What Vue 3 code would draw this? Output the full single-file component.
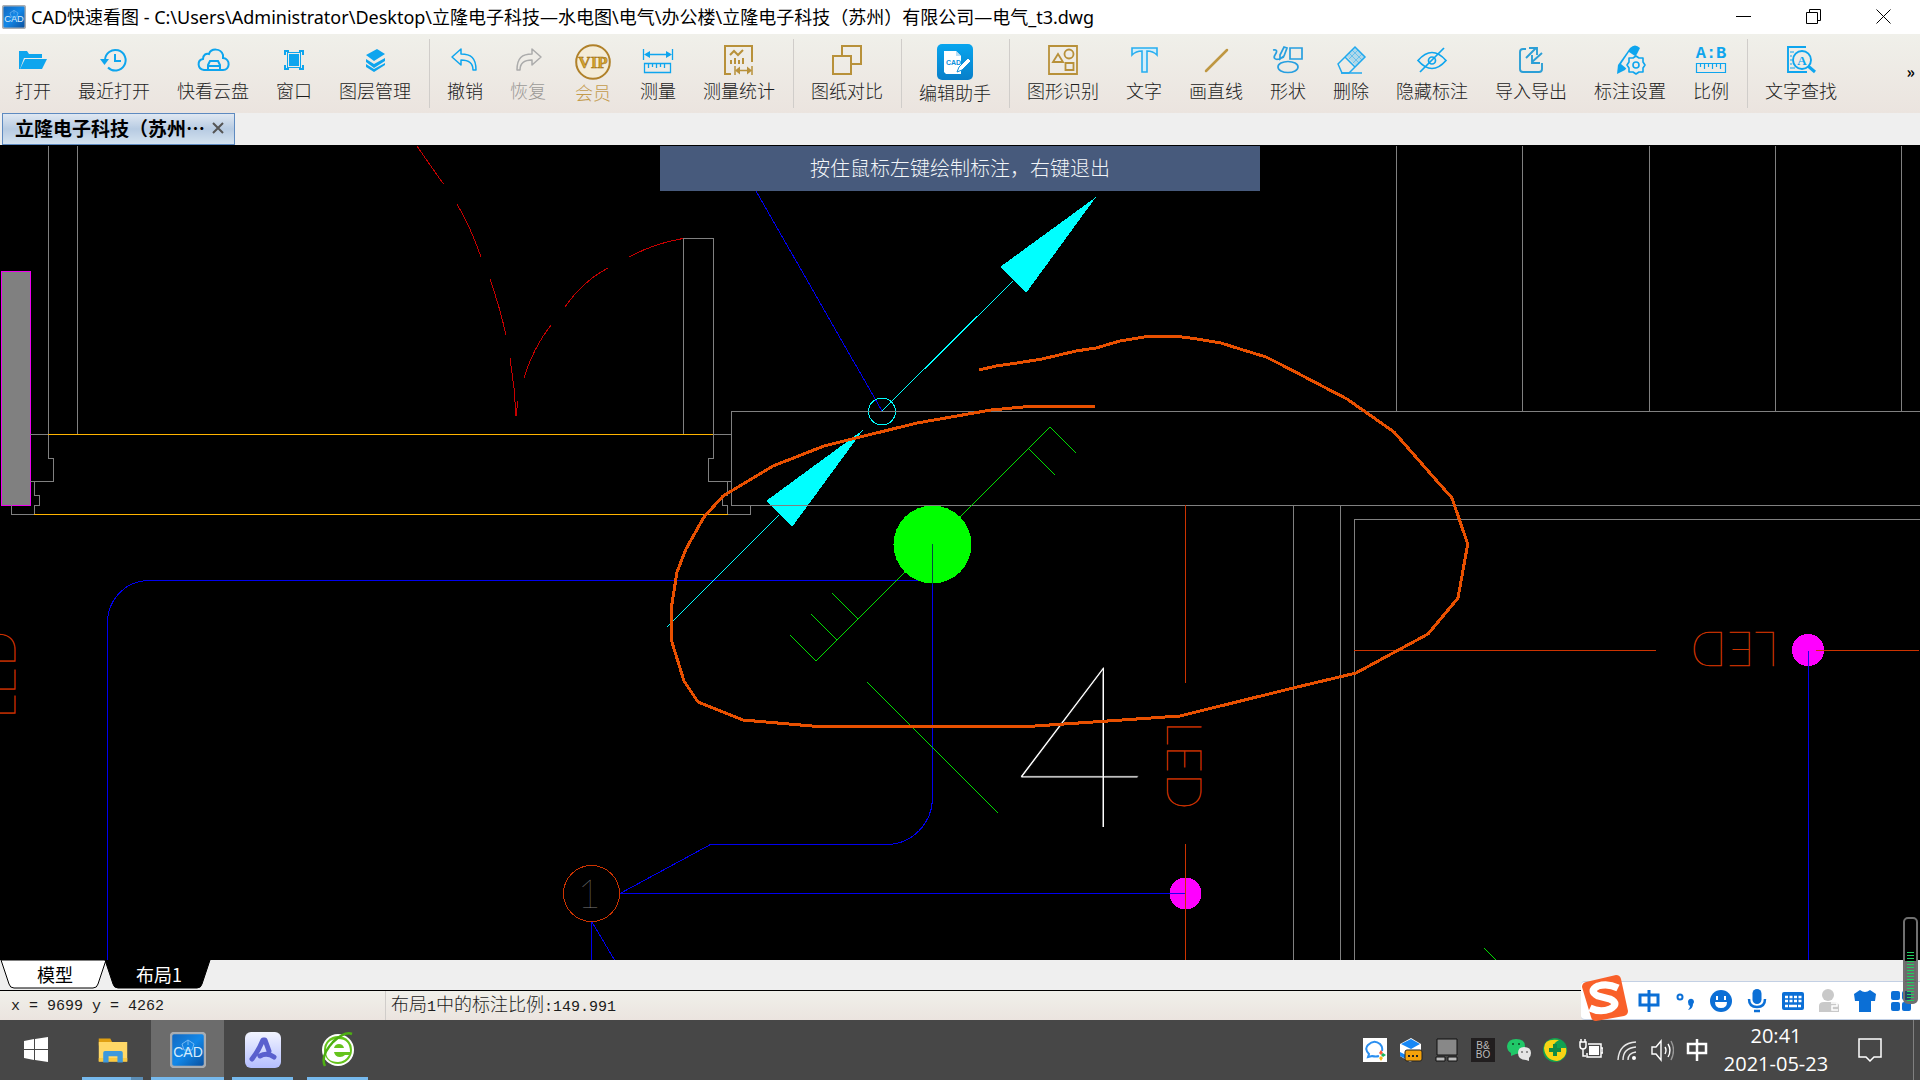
<script setup>
const blue = '#0ea5ee'
const gold = '#b8913a'

const icons = {
  open: `<path fill="${blue}" d="M4 25V7h8l2 3h13v4H9L5 25z"/><path fill="${blue}" d="M10 15h22l-5 10H5z"/>`,
  recent: `<g fill="none" stroke="${blue}" stroke-width="2"><path d="M9 16a10.3 10.3 0 1 1 3 7.5"/><path d="M19 10v7h6"/></g><path fill="${blue}" d="M4 15h9l-4.500 6z"/>`,
  cloud: `<g fill="none" stroke="${blue}" stroke-width="2"><path d="M12 26H9c-7-1-7-10-1-11 0-4 3-6 6-5 2-6 12-6 14 1v3c8 1 7 12 0 12h-3"/><path d="M13 26v-5l2-4h8l2 4v5zM13 22h12"/></g>`,
  window: `<g fill="none" stroke="${blue}" stroke-width="2"><path d="M9 11V7h4M23 7h4v4M27 21v4h-4M13 25H9v-4"/></g><rect x="11.500" y="8.500" width="13" height="15" fill="none" stroke="${blue}"/><rect x="13" y="10" width="10" height="12" fill="${blue}"/>`,
  layers: `<path fill="${blue}" d="M9 11l11-6 8 5-11 7zM9 15l8 5 11-6v3l-11 7-8-6zM9 20l8 5 11-6v2l-11 7-8-5z"/>`,
  undo: `<path fill="none" stroke="${blue}" stroke-width="1.500" stroke-linejoin="round" d="M5 13l9-8v5c10 0 15 4 15 16h-3c0-7-4-10-12-10v5z"/>`,
  redo: `<path fill="none" stroke="#ababab" stroke-width="1.500" stroke-linejoin="round" d="M31 13l-9-8v5C12 10 7 14 7 26h3c0-7 4-10 12-10v5z"/>`,
  vip: `<circle cx="18" cy="18" r="16.800" fill="#f4ecd8" stroke="#b0812a" stroke-width="2"/><text x="18" y="24" text-anchor="middle" font-family="Liberation Serif, serif" font-weight="700" font-size="17" fill="#d6a52c" stroke="#94650f" stroke-width=".5">VIP</text>`,
  measure: `<g fill="none" stroke="${blue}" stroke-width="1.300"><path d="M3.500 5v11M32.500 5v11M6 10.500h24"/><path d="M4.500 19.500h26v9h-26zM8.500 20v4M12.500 20v3M16.500 20v4M20.500 20v3M24.500 20v4"/></g><path fill="${blue}" d="M4 10.500l6-3.500v7zM32 10.500l-6-3.500v7z"/>`,
  stats: `<g fill="none" stroke="${gold}" stroke-width="2"><path d="M10 30H4V2h27v16M9 11l4-4 4 4 5-5M10 20v-4M14 20v-6M18 20v-4M22 20v-6"/><path d="M14 22v9M31 22v9M16 26.500h13" stroke-width="1.500"/></g><path fill="${gold}" d="M14 26.500l5-4v8zM31 26.500l-5-4v8z"/>`,
  compare: `<g fill="none" stroke="${gold}" stroke-width="2"><path d="M13 11V2h19v18h-9"/><path d="M4 12h18v18H4z"/></g>`,
  helper: `<defs><linearGradient id="hg" x2="0" y2="1"><stop stop-color="#08a5ee"/><stop offset="1" stop-color="#087fc9"/></linearGradient></defs><rect width="36" height="36" rx="5" fill="url(#hg)"/><path fill="#fff" d="M7 7h12l5 5v18H9l-2-2z"/><path fill="#b9def5" d="M19 7v5h5z"/><text x="9" y="21" font-family="Liberation Sans, sans-serif" font-size="7" font-weight="700" fill="#0b90dc">CAD</text><path d="M20 28l2-5 9-9 3 3-9 9z" fill="#fff" stroke="#0b90dc"/>`,
  shapes: `<g fill="none" stroke="${gold}" stroke-width="1.800"><path d="M4 2h28v28H4z"/><path d="M8 18l5-8 5 8z"/><circle cx="24" cy="10" r="4.500"/><path d="M20.500 19h8v7h-8z"/></g>`,
  text: `<path fill="#d3eefa" stroke="#27aef0" stroke-width="1.600" d="M6 4h25v7c-3-3-6-4-10-4v21h-5V7c-4 0-7 1-10 4z"/>`,
  line: `<path stroke="#bf9742" stroke-width="2.500" stroke-linecap="round" d="M8 27L29 6"/>`,
  forms: `<g fill="none" stroke="#279fe0" stroke-width="1.700"><path d="M20 4h12v11H20z"/><ellipse cx="18" cy="23" rx="10" ry="5.500"/><path d="M3 6c5-1 4 2 2 5s0 5 4 4l5-2M10 11l4-8 3 1-3 8-4 3z"/></g>`,
  erase: `<g fill="none" stroke="#20a9ee" stroke-width="1.500"><path d="M5 20L22 3l10 10-16 16h-7zM12 13l10 10"/><path d="M8 29h21"/></g><path fill="#20a9ee" fill-opacity=".3" d="M22 3l10 10-9 9-10-10z"/><path stroke="#20a9ee" stroke-width=".5" d="M19 6l10 10M16 9l10 10M25 6L16 15M29 10l-9 9"/>`,
  eye: `<g fill="none" stroke="${blue}" stroke-width="1.700"><path d="M4 16.500q14-16 28 0q-14 16-28 0z"/><circle cx="18" cy="16.500" r="3.500"/><path d="M30 4L6 28"/></g>`,
  exchange: `<g fill="none" stroke="#2c9fd6" stroke-width="1.900"><path d="M13 5h-3q-3 0-3 3v17q0 3 3 3h16q3 0 3-3v-6"/><path d="M13 14L23 4M16 4h8v7M29 9L19 18M19 11v8h8"/></g>`,
  settings: `<path fill="${blue}" d="M5 30l1-9L18 4q5-5 10 0l-3 6-12 16z"/><path fill="#eeedea" d="M9 20l8-12 6 4-8 13z"/><path d="M24 12l3 2h4v4l2 3-2 3v4h-4l-3 2-3-2h-4v-4l-2-3 2-3v-4h4z" fill="#eeedea" stroke="${blue}" stroke-width="1.600" stroke-linejoin="round"/><circle cx="24" cy="21" r="3" fill="none" stroke="${blue}" stroke-width="1.600"/>`,
  ratio: `<text x="18" y="14" text-anchor="middle" font-family="Liberation Mono, monospace" font-weight="700" font-size="17" fill="${blue}">A:B</text><path fill="none" stroke="${blue}" stroke-width="1.200" d="M3.500 19.500h29v9h-29zM7.500 20v3M11.500 20v5M15.500 20v3M19.500 20v5M23.500 20v3M27.500 20v5"/>`,
  find: `<g fill="none" stroke="${blue}" stroke-width="1.900"><path d="M23 3H5v25h19"/><circle cx="19" cy="16" r="9"/><path d="M25 22l7 6" stroke-width="3"/></g><path stroke="${blue}" d="M7 8h4M7 12h2M7 16h2M7 20h2M7 24h5"/><text x="19" y="21" text-anchor="middle" font-family="Liberation Serif, serif" font-weight="700" font-size="13" fill="${blue}">A</text>`,
}

const groups = [
  [['打开', 'open'], ['最近打开', 'recent'], ['快看云盘', 'cloud'], ['窗口', 'window'], ['图层管理', 'layers']],
  [['撤销', 'undo'], ['恢复', 'redo', 'off'], ['会员', 'vip', 'big gold'], ['测量', 'measure'], ['测量统计', 'stats']],
  [['图纸对比', 'compare']],
  [['编辑助手', 'helper', 'big']],
  [['图形识别', 'shapes'], ['文字', 'text'], ['画直线', 'line'], ['形状', 'forms'], ['删除', 'erase'], ['隐藏标注', 'eye'], ['导入导出', 'exchange'], ['标注设置', 'settings'], ['比例', 'ratio']],
  [['文字查找', 'find']],
]

const ime = [
  ['中文', `<path fill="none" stroke="#0b6fd6" stroke-width="3" d="M3 6h18v10H3zM12 1v22"/>`],
  ['标点', `<circle cx="7" cy="8" r="2.500" fill="none" stroke="#0b6fd6" stroke-width="2"/><path fill="#0b6fd6" d="M15 13a3 3 0 1 1 5 2q0 5-5 6 2-2 2-4-2-1-2-4z"/>`],
  ['表情', `<circle cx="12" cy="12" r="11" fill="#0b6fd6"/><path fill="#fff" d="M7 7h2v4H7zM15 7h2v4h-2zM6 13h12q0 6-6 6t-6-6z"/>`],
  ['语音', `<rect x="7.500" y="0" width="9" height="15" rx="4.500" fill="#0b6fd6"/><path fill="none" stroke="#0b6fd6" stroke-width="2.500" d="M4 10q0 8 8 8t8-8M9 22h6"/>`],
  ['键盘', `<rect x="1" y="3" width="22" height="18" rx="2" fill="#0b6fd6"/><path stroke="#fff" stroke-width="2.500" stroke-dasharray="3 1.500" d="M4 8h17M4 12h17"/><path stroke="#fff" stroke-width="2.500" d="M4 17h3M8 17h8M17 17h3"/>`],
  ['账号', `<circle cx="11" cy="6" r="6" fill="#c9c9c9"/><path fill="#c9c9c9" d="M2 23v-6q0-4 5-4h9q6 0 6 4v6z"/><path fill="none" stroke="#fff" stroke-width="1.500" d="M14 14h6v3h-5v4h6"/>`],
  ['皮肤', `<path fill="#0b6fd6" d="M7 1q5 4 10 0l6 4-1 7h-4v11H6V12H2L1 5z"/>`],
  ['工具箱', `<g fill="#0b6fd6"><rect x="2" y="2" width="9" height="9" rx="2"/><rect x="13" y="2" width="9" height="9" rx="2"/><rect x="2" y="13" width="9" height="9" rx="2"/><rect x="13" y="13" width="9" height="9" rx="2"/></g>`],
]

const tray = [
  ['会议', `<path fill="#fff" d="M0 0h24v24H0z"/><path fill="none" stroke="#2b8ff0" stroke-width="2" d="M16 18q-3 1-7 0l-4 1 1-3q-5-5-1-9 6-6 12-1 3 3 2 7"/><path fill="#ff5b3a" d="M18 12l2 3-2 2-2-2z"/><path fill="#1cb65c" d="M20 15l3 2-3 2-2-2z"/><path fill="#f8b91d" d="M18 18l2 2-2 3-2-3z"/>`],
  ['存储', `<path fill="#fff" d="M1 6l11-6 10 6v13l-11 5-10-6z"/><path fill="#1687f5" d="M2 6l10-5 9 5-9 5zM1 14l6 3v4l-6-3z"/><rect x="6" y="12" width="17" height="11" rx="2" fill="#f5a20b" stroke="#222"/><path d="M9 18h2M13 18h2M17 18h2" stroke="#222" stroke-width="2"/>`],
  ['触控板', `<path fill="#888" stroke="#111" d="M2 1h20v16H2z"/><path fill="#bbb" stroke="#111" d="M1 19h9v4H1zM13 19h9v4h-9z"/>`],
  ['音频', `<path fill="#211e1f" d="M0 0h24v24H0z"/><text x="12" y="11" text-anchor="middle" font-family="Liberation Sans, sans-serif" font-size="10" fill="#bbb">B&amp;</text><text x="12" y="20" text-anchor="middle" font-family="Liberation Sans, sans-serif" font-size="10" fill="#bbb">BO</text>`],
  ['微信', `<path fill="#20c868" d="M9 1q9 0 9 7t-9 8l-5 2v-3q-4-2-4-7 1-7 9-7z"/><path fill="#e5e5e5" d="M17 9q7 0 7 6 0 3-2 5v3l-3-1q-8 0-8-7 0-6 6-6z"/><path stroke="#116633" stroke-width="2" d="M5 6h2M11 6h2"/><path stroke="#777" stroke-width="1.500" d="M14 14h2M19 14h2"/>`],
  ['安全', `<circle cx="12" cy="12" r="12" fill="#11a152"/><path fill="#f8d415" d="M1 10q0-10 15-8-7 4-5 8h12q2 10-9 13Q2 22 1 10z"/><path stroke="#118a45" stroke-width="4" d="M12 6v12M6 12h12"/>`],
  ['电源', `<path fill="none" stroke="#fff" stroke-width="1.500" d="M9 6h13v13H8v-4M22 10h2v5h-2M1 4v4q0 3 3 3t3-3V4zM2 4V1M6 4V1M4 11v7h3"/><path fill="#fff" d="M10 8h10v9H10z"/>`],
  ['网络', `<g fill="none" stroke="#e8e8e8" stroke-width="1.400"><path d="M3 22Q4 5 21 4M8 22Q8 10 21 9M13 22q0-7 8-8"/></g><circle cx="19" cy="20" r="2" fill="#fff"/>`],
  ['音量', `<g fill="none" stroke="#fff" stroke-width="1.400"><path d="M2 9h4l5-6v19l-5-6H2zM15 9q2 3 0 7M18 6q4 6 0 13"/><path stroke="#999" d="M21 3q5 9 0 19"/></g>`],
  ['输入法', `<path fill="none" stroke="#fff" stroke-width="2.500" d="M3 6h18v9H3zM12 1v22"/>`],
]

const CAD = `<defs><linearGradient id="cg" x2="1" y2="1"><stop stop-color="#1266bd"/><stop offset=".5" stop-color="#1388e8"/><stop offset="1" stop-color="#0a4c99"/></linearGradient></defs><rect x="1" y="1" width="34" height="34" rx="3" fill="url(#cg)" stroke="#a9adb2" stroke-width="2.500"/><path d="M12 12l6-4 6 4-2 6h-8zM18 8v5" fill="none" stroke="#75b9f3"/><text x="18" y="25" text-anchor="middle" font-family="Liberation Sans, sans-serif" font-size="14" fill="#d8ecfc">CAD</text>`

const apps = [
  ['开始', 'start', `<path fill="#fff" d="M6 9l10-2v10H6zM17 7l13-2v12H17zM6 18h10v10L6 26zM17 18h13v12l-13-2z"/>`],
  ['文件资源管理器', 'run split', `<path fill="#e0a012" d="M2 5h13l2 4v4H2z"/><path fill="#ffd867" d="M2 9h32v22H2z"/><path fill="#fbc93e" d="M2 27h32v4H2z"/><path fill="#3d99dd" d="M7 32V21q0-2 2-2h18q2 0 2 2v11h-6v-7H13v7z"/>`],
  ['CAD快速看图', 'run active', CAD],
  ['应用', 'run', `<defs><linearGradient id="ag" x2="0" y2="1"><stop stop-color="#f2f4ff"/><stop offset="1" stop-color="#b4beff"/></linearGradient></defs><rect width="36" height="36" rx="6" fill="url(#ag)"/><path fill="none" stroke="#5a60ce" stroke-width="5" stroke-linecap="round" stroke-linejoin="round" d="M7 27Q14 18 18 8h2l4 11M29 25q-7-5-14-1"/>`],
  ['浏览器', 'run', `<circle cx="18" cy="18" r="16" fill="#fff"/><circle cx="18" cy="18" r="14" fill="#65c31c"/><path fill="#fff" d="M6 19q0-12 12-12t12 13H14q1 5 6 5 3 0 5-2h4q-4 7-11 7Q6 30 6 19z"/><path fill="#65c31c" d="M14 16q1-4 5-4t5 4z"/><path fill="none" stroke="#4daf12" stroke-width="2.500" d="M32 2Q25-1 13 10 0 24 5 34"/>`],
]

const grey = [
  'M48.500 146V458.500H53.500V481.500H30', 'M77.500 146V434', 'M30 434.500H48', 'M34.500 481V495.500H39.500V505.500H34.500V514.500H11.500V505',
  'M683.500 434V238.500H713.500V458.500H708.500V481.500H731', 'M713 434.500H731', 'M727.500 481V495.500H722.500V505.500H727.500V514.500H750.500V505',
  'M1920 411.500H731.500V505.500H1920', 'M1396.500 146V411', 'M1522.500 146V411', 'M1649.500 146V411', 'M1775.500 146V411', 'M1901.500 146V411',
  'M1293.500 505V960', 'M1340.500 505V960', 'M1354.500 960V519.500H1920',
]
const arcs = [
  'M417 146Q432 168 443.500 184', 'M457 204Q471 228 481 257', 'M490 279Q500 308 506 335', 'M510 358L514 388L516 416L518 401',
  'M524 378Q533 348 551 325', 'M565 307Q583 281 608 268', 'M629 257Q655 243 683 238.500',
]
const wires = [
  'M107.500 960V623A41 42 0 0 1 148 580.500H924', 'M756 191L882 411', 'M932.500 544V797A46 47 0 0 1 887 844.500H710.500L620 893.500H1185',
  'M591.500 922V960', 'M592 922L614.500 960', 'M1808.500 651V960',
]
const greens = [
  'M1076 453L1050 427L816 661L790 635', 'M1029 449L1055 475', 'M837 640L811 614', 'M858 619L832 593', 'M867 682L998 813', 'M1484.500 948.500L1496 960',
]
const sketch = '979,370 996,366 1017,363 1042,359 1076,351 1096,348 1120,341 1144,337 1158,336 1175,336 1197,339 1221,343 1240,349 1266,357 1280,364 1347,399 1394,432 1436,480 1452,498 1467,542 1467,548 1458,598 1428,634 1356,673 1293,688 1180,716 1035,726 812,726 743,720 698,702 684,681 671,639 671,610 677,572 686,549 704,517 723,496 773,466 824,446 860,437 917,423 991,410 1034,406 1084,406 1095,407'
</script>

<template>
  <div class="desktop">
    <header class="titlebar">
      <svg class="logo" viewBox="0 0 36 36" v-html="CAD"></svg>
      <h1>CAD快速看图 - C:\Users\Administrator\Desktop\立隆电子科技—水电图\电气\办公楼\立隆电子科技（苏州）有限公司—电气_t3.dwg</h1>
      <div class="winctl">
        <button aria-label="最小化"><svg viewBox="0 0 16 16"><path d="M0 7.500h15" /></svg></button>
        <button aria-label="还原"><svg viewBox="0 0 16 16"><path d="M.5 3.500h11v11H.5zM3.500 3V.5h11v11H12" /></svg></button>
        <button aria-label="关闭"><svg viewBox="0 0 16 16"><path d="M.5.5l14 14M14.500.5l-14 14" /></svg></button>
      </div>
    </header>

    <nav class="toolbar">
      <div v-for="(g, i) in groups" :key="i" class="group">
        <button v-for="t in g" :key="t[1]" class="tool" :class="t[2]">
          <svg :viewBox="(t[2] || '').includes('big') ? '0 0 36 36' : '0 0 36 32'" v-html="icons[t[1]]"></svg>
          <span>{{ t[0] }}</span>
        </button>
      </div>
      <button class="more">»</button>
    </nav>

    <div class="filetabs">
      <div class="filetab">
        <span>立隆电子科技（苏州…</span>
        <button aria-label="关闭标签"><svg viewBox="0 0 12 12"><path d="M1 1l10 10M11 1L1 11" /></svg></button>
      </div>
    </div>

    <main class="canvas">
      <svg class="drawing" viewBox="0 145 1920 815" preserveAspectRatio="xMinYMin slice">
        <g class="crisp">
          <path v-for="d in wires" :key="d" :d="d" stroke="#0000f0" />
          <rect x="1" y="271.500" width="29" height="234" fill="#808080" stroke="#f000f0" />
          <path v-for="d in arcs" :key="d" :d="d" stroke="#c80000" />
          <path d="M882 411L1013 281M667 627L779 515" stroke="#00ffff" />
          <path d="M1096 197L1000 267L1026 293ZM863 430L766 501L792 527Z" class="cyan" />
          <circle cx="882" cy="411.500" r="13.500" stroke="#00ffff" />
          <path v-for="d in grey" :key="d" :d="d" stroke="#808080" />
          <path d="M48 434.500H713M34 514.500H728" stroke="#ffb400" />
          <path v-for="d in greens" :key="d" :d="d" stroke="#00e000" />
          <circle cx="932.500" cy="544.500" r="39" class="lamp" />
          <path d="M932.500 544V584" stroke="#004d40" />
          <circle cx="1185.500" cy="893.500" r="16" class="node" />
          <circle cx="1808" cy="650" r="16" class="node" />
          <path d="M1169 893.500H1185M1808.500 651V667" stroke="#2000f0" />
          <path d="M1185.500 505V683M1185.500 844V960M1354 650.500H1656M1816 650.500H1919" stroke="#cc3300" />
          <circle cx="591.500" cy="893.500" r="28" stroke="#cc3300" />
        </g>
        <text class="led" transform="translate(1167 721) rotate(90)">LED</text>
        <text class="led" transform="translate(1779 632) rotate(180)">LED</text>
        <text class="led" transform="translate(15 719) rotate(-90)">LED</text>
        <text class="num" x="589" y="908" text-anchor="middle">1</text>
        <text class="count" x="1080" y="827" text-anchor="middle">4</text>
        <polyline class="crisp sketch" :points="sketch" />
      </svg>
      <p class="hint">按住鼠标左键绘制标注，右键退出</p>
    </main>

    <footer class="bottom">
      <div class="sheets">
        <button class="sheet model">
          <svg viewBox="0 0 107 29"><path d="M1 0L9 24q1 4 5 4H93q4 0 5-4L106 0z" /></svg>
          <span>模型</span>
        </button>
        <button class="sheet layout">
          <svg viewBox="0 0 107 29"><path d="M1 0L9 24q1 4 5 4H93q4 0 5-4L106 0z" /></svg>
          <span>布局1</span>
        </button>
      </div>
      <div class="status">
        <span class="coords mono">x = 9699 y = 4262</span>
        <span class="scale">布局<i class="mono">1</i>中的标注比例<i class="mono">:149.991</i></span>
      </div>
      <div class="ime">
        <svg class="sogou" viewBox="0 0 48 46">
          <path d="M5 7L35 0q4 0 5 4l7 32q0 4-4 5L15 46q-4 0-5-4L1 12q0-4 4-5z" fill="#f9602a" />
          <path d="M37 13Q27 8 17 11q-10 5 0 10l12 3q10 5 0 10-10 4-20-1" fill="none" stroke="#fff" stroke-width="7" />
        </svg>
        <button v-for="m in ime" :key="m[0]" :aria-label="m[0]"><svg viewBox="0 0 24 24" v-html="m[1]"></svg></button>
      </div>
      <div class="meter"><i></i></div>
    </footer>

    <div class="taskbar">
      <button v-for="a in apps" :key="a[0]" class="app" :class="a[1]" :aria-label="a[0]">
        <svg viewBox="0 0 36 36" v-html="a[2]"></svg>
      </button>
      <div class="tray">
        <button v-for="t in tray" :key="t[0]" :aria-label="t[0]"><svg viewBox="0 0 24 24" v-html="t[1]"></svg></button>
      </div>
      <div class="clock"><time>20:41</time><time>2021-05-23</time></div>
      <button class="notice" aria-label="通知"><svg viewBox="0 0 24 24"><path d="M1 1h22v18h-7l-4 4-4-4H1z" /></svg></button>
    </div>
  </div>
</template>

<style>
body { margin: 0; background: #000; }
</style>

<style scoped>
.desktop {
  display: flex;
  flex-direction: column;
  min-height: 100vh;
  overflow: hidden;
  font-family: "Noto Sans CJK SC", sans-serif;
  font-size: 18px;
  color: #000;
}
button {
  margin: 0;
  padding: 0;
  border: 0;
  background: none;
  font: inherit;
  color: inherit;
}
svg { display: block; flex: none; }
h1, p { margin: 0; font-weight: 400; }

.titlebar {
  display: flex;
  align-items: center;
  height: 34px;
  padding: 0 1px 0 2px;
  background: #fff;
}
.logo { width: 24px; height: 24px; margin-right: 5px; }
.titlebar h1 {
  flex: 1;
  overflow: hidden;
  white-space: nowrap;
  font-family: "Noto Sans", "Noto Sans CJK SC", sans-serif;
  font-size: 18px;
  line-height: 34px;
}
.winctl { display: flex; }
.winctl button { display: flex; justify-content: center; width: 70px; padding: 9px 0; }
.winctl svg { width: 16px; height: 16px; fill: none; stroke: #000; }

.toolbar {
  display: flex;
  height: 79px;
  background: linear-gradient(#f0f0ea, #ebe4df);
}
.group {
  display: flex;
  align-items: flex-start;
  gap: 27px;
  margin: 5px 0;
  padding: 5px 18px 0 17px;
  border-right: 1px solid #d0cdca;
}
.group:first-child { padding-left: 15px; }
.group:nth-child(6) { border-right: 0; }
.tool {
  display: flex;
  flex-direction: column;
  align-items: center;
  gap: 3px;
  min-width: 36px;
  line-height: 22px;
  font-weight: 300;
  color: #1c1c1c;
  white-space: nowrap;
}
.tool svg { width: 36px; height: 32px; }
.big { gap: 1px; }
.big svg { height: 36px; }
.gold { width: 40px; color: #c39a4b; }
.off { color: #9c9a98; }
.more { margin-left: auto; padding: 0 5px 6px 0; font-size: 16px; font-weight: 700; }

.filetabs { display: flex; height: 32px; padding-left: 2px; background: #efefef; }
.filetab {
  display: flex;
  align-items: center;
  gap: 7px;
  box-sizing: border-box;
  width: 233px;
  padding: 0 0 2px 12px;
  border: 1px solid #5e8ac0;
  background: linear-gradient(#e0e8f2, #b7cbe2 50%, #d5e3f0);
  font-size: 19px;
  font-weight: 700;
  line-height: 28px;
  white-space: nowrap;
}
.filetab svg { width: 12px; height: 12px; fill: none; stroke: #555; stroke-width: 2; }

.canvas { display: grid; flex: 1; overflow: hidden; background: #000; }
.drawing { grid-area: 1 / 1; width: 100%; height: 100%; }
.crisp { fill: none; shape-rendering: crispEdges; }
.cyan { fill: #0ff; }
.lamp { fill: #0f0; }
.node { fill: #f0f; }
.sketch { stroke: #e85000; stroke-width: 3; }
.led { font: 100 48px Lato, sans-serif; fill: #cc3300; stroke: #cc3300; stroke-width: 0.5; }
.num { font: 100 40px Lato, sans-serif; fill: #808080; }
.count { font: 100 228px Lato, sans-serif; fill: #fff; stroke: #000; stroke-width: 1; }
.hint {
  grid-area: 1 / 1;
  align-self: start;
  justify-self: center;
  width: 600px;
  margin-top: 1px;
  padding-bottom: 2px;
  background: #475a7c;
  color: #f2f5f8;
  font-size: 20px;
  font-weight: 300;
  line-height: 43px;
  text-align: center;
}

.bottom { position: relative; }
.sheets { display: flex; height: 30px; background: #efefef; border-bottom: 1px solid #000; }
.sheet { display: grid; width: 104px; }
.sheet svg { grid-area: 1 / 1; width: 107px; height: 29px; fill: #fff; stroke: #000; }
.sheet span { grid-area: 1 / 1; z-index: 1; width: 110px; line-height: 28px; text-align: center; }
.layout { color: #fff; }
.layout svg { fill: #000; }
.status {
  display: flex;
  align-items: center;
  height: 29px;
  background: linear-gradient(#f0f0ea, #ebe4df);
  color: #1c1c1c;
  font-weight: 300;
}
.mono { font-family: "Liberation Mono", monospace; font-size: 15px; font-style: normal; font-weight: 400; }
.coords { width: 374px; padding: 2px 0 0 11px; }
.scale { padding-left: 5px; border-left: 1px solid #d0cdca; line-height: 24px; }
.ime {
  position: absolute;
  right: 0;
  bottom: 0;
  display: flex;
  align-items: center;
  box-sizing: border-box;
  height: 39px;
  padding-right: 1px;
  border: 1px solid #c3d0e4;
  border-width: 1px 0;
  border-radius: 4px 0 0 4px;
  background: #fff;
}
.ime button { width: 36px; padding: 0 6px; box-sizing: border-box; }
.ime button svg { width: 24px; height: 24px; }
.sogou { width: 48px; height: 46px; margin: -6px 2px 0 0; }
.meter {
  position: absolute;
  right: 2px;
  bottom: 16px;
  box-sizing: border-box;
  width: 15px;
  height: 87px;
  padding: 33px 2px 3px;
  border: 2px solid #707070;
  border-radius: 5px;
  background: linear-gradient(#000 42px, rgba(50, 50, 50, 0.7) 42px);
}
.meter i { display: block; height: 49px; background: repeating-linear-gradient(#20d060 0 1px, transparent 1px 3px); }

.taskbar { display: flex; height: 60px; background: #474747; color: #fff; }
.app {
  display: flex;
  align-items: center;
  justify-content: center;
  box-sizing: border-box;
  width: 61px;
  margin-left: 14px;
  padding-top: 3px;
  border-bottom: 3px solid #76b9ed;
}
.app svg { width: 36px; height: 36px; }
.start { width: 72px; margin-left: 0; border-color: transparent; }
.split { margin-left: 10px; border-image: linear-gradient(90deg, #76b9ed 47px, #5b8db5 47px) 3; }
.split svg { width: 32px; height: 32px; }
.active { width: 73px; margin-left: 8px; background: #6c6c6c; }
.active + .app { margin-left: 8px; }
.tray { display: flex; align-items: center; margin-left: auto; }
.tray button { width: 36px; padding: 0 6px; box-sizing: border-box; }
.tray button:nth-child(n + 8) { width: 35px; padding-right: 5px; }
.tray svg { width: 24px; height: 24px; }
.clock {
  display: flex;
  flex-direction: column;
  align-items: center;
  width: 124px;
  padding-top: 2px;
  font-family: "Open Sans", sans-serif;
  font-size: 20px;
  line-height: 28px;
}
.notice { width: 76px; margin-right: 6px; padding: 0 31px 0 20px; border-right: 1px solid #808080; }
.notice svg { width: 24px; height: 24px; fill: none; stroke: #fff; stroke-width: 1.500; }
</style>
